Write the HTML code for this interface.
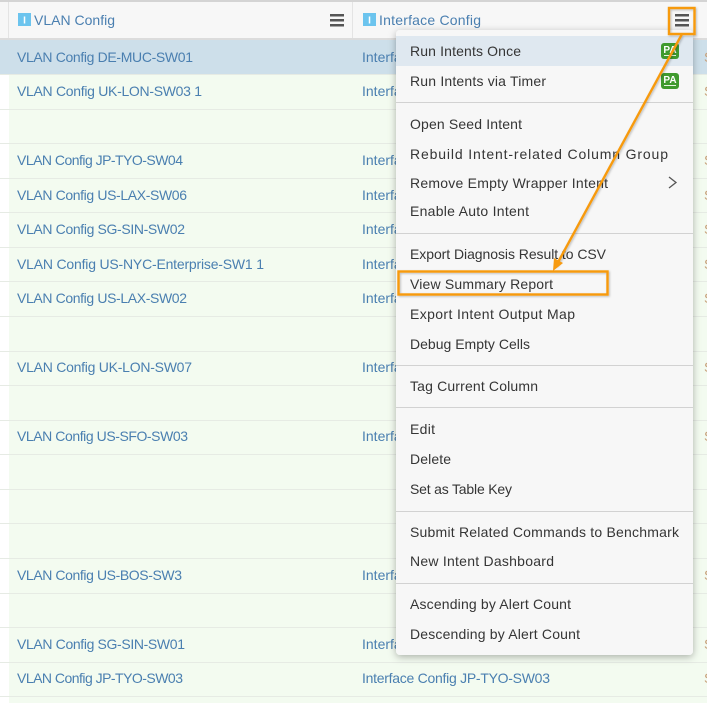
<!DOCTYPE html>
<html><head><meta charset="utf-8"><style>
html,body{margin:0;padding:0;background:#fff;width:707px;height:703px;overflow:hidden}
svg{display:block;filter:blur(.35px)}
text{font-family:"Liberation Sans","DejaVu Sans",sans-serif;font-size:14px}
.l text,.l{fill:#4a7fb0}
.m text,.m{fill:#353535}
</style></head><body>
<svg width="707" height="703" viewBox="0 0 707 703" xmlns="http://www.w3.org/2000/svg">
<defs>
<filter id="sh" x="-10%" y="-5%" width="120%" height="110%"><feDropShadow dx="0" dy="2" stdDeviation="4" flood-color="#000" flood-opacity=".3"/></filter>
<filter id="ls" x="-10%" y="-10%" width="120%" height="120%"><feDropShadow dx="1" dy="1" stdDeviation="1" flood-color="#000" flood-opacity=".25"/></filter>
</defs>
<!-- table background -->
<rect x="0" y="0" width="707" height="703" fill="#fff"/>
<rect x="9" y="75" width="698" height="628" fill="#f3fbf0"/>
<rect x="0" y="40" width="707" height="34" fill="#cddfea"/>
<!-- header -->
<rect x="0" y="0" width="707" height="2" fill="#d4d4d4"/>
<rect x="0" y="2" width="707" height="36" fill="#f7f7f7"/>
<rect x="0" y="38" width="707" height="2" fill="#dcdcdc"/>
<rect x="8" y="2" width="1" height="36" fill="#e4e4e4"/>
<rect x="352" y="2" width="1" height="36" fill="#e4e4e4"/>
<!-- row lines -->
<g fill="#e6ebe4">
<rect x="0" y="74" width="707" height="1"/><rect x="0" y="109" width="707" height="1"/><rect x="0" y="143" width="707" height="1"/><rect x="0" y="178" width="707" height="1"/><rect x="0" y="212" width="707" height="1"/><rect x="0" y="247" width="707" height="1"/><rect x="0" y="281" width="707" height="1"/><rect x="0" y="316" width="707" height="1"/><rect x="0" y="351" width="707" height="1"/><rect x="0" y="385" width="707" height="1"/><rect x="0" y="420" width="707" height="1"/><rect x="0" y="454" width="707" height="1"/><rect x="0" y="489" width="707" height="1"/><rect x="0" y="523" width="707" height="1"/><rect x="0" y="558" width="707" height="1"/><rect x="0" y="593" width="707" height="1"/><rect x="0" y="627" width="707" height="1"/><rect x="0" y="662" width="707" height="1"/><rect x="0" y="696" width="707" height="1"/>
</g>
<!-- header content -->
<rect x="18" y="13" width="13" height="13" fill="#6cc4ee"/>
<text x="24.5" y="23.500" text-anchor="middle" style="font-size:10px;font-weight:bold" fill="#fff">I</text>
<text x="34" y="25" class="l" textLength="81">VLAN Config</text>
<g fill="#555"><rect x="330" y="14" width="14" height="2.500"/><rect x="330" y="19" width="14" height="2.500"/><rect x="330" y="24" width="14" height="2.500"/></g>
<rect x="363" y="13" width="13" height="13" fill="#6cc4ee"/>
<text x="369.5" y="23.500" text-anchor="middle" style="font-size:10px;font-weight:bold" fill="#fff">I</text>
<text x="379" y="25" class="l" textLength="102">Interface Config</text>
<g fill="#555"><rect x="675" y="14" width="14" height="2.500"/><rect x="675" y="19" width="14" height="2.500"/><rect x="675" y="24" width="14" height="2.500"/></g>
<!-- column 1 -->
<g class="l">
<text x="17" y="62" textLength="176">VLAN Config DE-MUC-SW01</text>
<text x="17" y="96" textLength="185">VLAN Config UK-LON-SW03 1</text>
<text x="17" y="165" textLength="166">VLAN Config JP-TYO-SW04</text>
<text x="17" y="200" textLength="170">VLAN Config US-LAX-SW06</text>
<text x="17" y="234" textLength="168">VLAN Config SG-SIN-SW02</text>
<text x="17" y="269" textLength="247">VLAN Config US-NYC-Enterprise-SW1 1</text>
<text x="17" y="303" textLength="170">VLAN Config US-LAX-SW02</text>
<text x="17" y="372" textLength="175">VLAN Config UK-LON-SW07</text>
<text x="17" y="441" textLength="171">VLAN Config US-SFO-SW03</text>
<text x="17" y="580" textLength="165">VLAN Config US-BOS-SW3</text>
<text x="17" y="649" textLength="168">VLAN Config SG-SIN-SW01</text>
<text x="17" y="683" textLength="166">VLAN Config JP-TYO-SW03</text>
</g>
<!-- column 2 -->
<g class="l">
<text x="362" y="62">Interface</text>
<text x="362" y="96">Interface</text>
<text x="362" y="165">Interface</text>
<text x="362" y="200">Interface</text>
<text x="362" y="234">Interface</text>
<text x="362" y="269">Interface</text>
<text x="362" y="303">Interface</text>
<text x="362" y="372">Interface</text>
<text x="362" y="441">Interface</text>
<text x="362" y="580">Interface</text>
<text x="362" y="649">Interface</text>
<text x="362" y="683" textLength="188">Interface Config JP-TYO-SW03</text>
</g>
<!-- right edge column -->
<g fill="#c8a27c">
<text x="704" y="62">S</text><text x="704" y="96">S</text><text x="704" y="165">S</text><text x="704" y="200">S</text><text x="704" y="234">S</text><text x="704" y="269">S</text><text x="704" y="303">S</text><text x="704" y="372">S</text><text x="704" y="441">S</text><text x="704" y="580">S</text><text x="704" y="649">S</text><text x="704" y="683">S</text>
</g>
<!-- menu -->
<rect x="396" y="30" width="297" height="625" rx="4" fill="#f7f7f7" filter="url(#sh)"/>
<rect x="396" y="36" width="297" height="30" fill="#dfe8f0"/>
<g fill="#d2d2d2">
<rect x="396" y="102" width="297" height="1"/><rect x="396" y="233" width="297" height="1"/><rect x="396" y="365" width="297" height="1"/><rect x="396" y="407" width="297" height="1"/><rect x="396" y="511" width="297" height="1"/><rect x="396" y="583" width="297" height="1"/>
</g>
<g class="m">
<text x="410" y="56" textLength="111">Run Intents Once</text>
<text x="410" y="86" textLength="136">Run Intents via Timer</text>
<text x="410" y="129" textLength="112">Open Seed Intent</text>
<text x="410" y="159" textLength="258">Rebuild Intent-related Column Group</text>
<text x="410" y="188" textLength="198">Remove Empty Wrapper Intent</text>
<text x="410" y="216" textLength="119">Enable Auto Intent</text>
<text x="410" y="259" textLength="196">Export Diagnosis Result to CSV</text>
<text x="410" y="289" textLength="143">View Summary Report</text>
<text x="410" y="319" textLength="165">Export Intent Output Map</text>
<text x="410" y="349" textLength="120">Debug Empty Cells</text>
<text x="410" y="391" textLength="128">Tag Current Column</text>
<text x="410" y="434" textLength="25">Edit</text>
<text x="410" y="464" textLength="41">Delete</text>
<text x="410" y="494" textLength="102">Set as Table Key</text>
<text x="410" y="537" textLength="269">Submit Related Commands to Benchmark</text>
<text x="410" y="566" textLength="144">New Intent Dashboard</text>
<text x="410" y="609" textLength="161">Ascending by Alert Count</text>
<text x="410" y="639" textLength="170">Descending by Alert Count</text>
</g>
<path d="M669 177l7 5.500-7 5.500" fill="none" stroke="#555" stroke-width="1.300"/>
<!-- PA badges -->
<rect x="661" y="43" width="18" height="16" rx="3" fill="#3f9a2e"/>
<text x="670" y="53" text-anchor="middle" style="font-size:10px;font-weight:bold" fill="#fff">PA</text>
<rect x="664" y="55" width="12" height="1" fill="#e6f5e0"/>
<rect x="661" y="73" width="18" height="16" rx="3" fill="#3f9a2e"/>
<text x="670" y="83" text-anchor="middle" style="font-size:10px;font-weight:bold" fill="#fff">PA</text>
<rect x="664" y="85" width="12" height="1" fill="#e6f5e0"/>
<!-- annotations -->
<g filter="url(#ls)" fill="none" stroke="#f79a10">
<rect x="669" y="8" width="25.500" height="26" stroke-width="2.400"/>
<rect x="398.500" y="271.500" width="209" height="23" stroke-width="2.400"/>
<path d="M682 34L556 266" stroke-width="2.400"/>
</g>
<path d="M553 271L554 258L563 263Z" fill="#f79a10"/>
</svg>
</body></html>
